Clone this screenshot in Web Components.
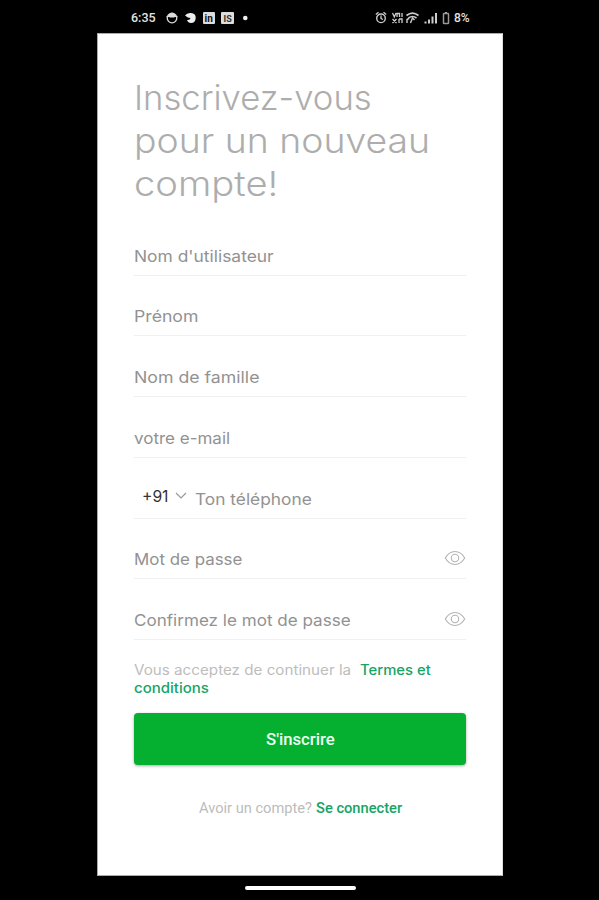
<!DOCTYPE html>
<html lang="fr">
<head>
<meta charset="utf-8">
<title>Inscription</title>
<style>
html, body { margin: 0; height: 100%; background: #000; overflow: hidden; }
</style>
</head>
<body>
<signup-screen></signup-screen>
<script>
function define(name, html, setup) {
  const template = document.createElement('template');
  template.innerHTML = html;
  customElements.define(name, class extends HTMLElement {
    constructor() {
      super();
      this.attachShadow({ mode: 'open' }).append(template.content.cloneNode(true));
    }
    connectedCallback() { if (setup) setup(this, this.shadowRoot); }
  });
}

// A single line of text stretched horizontally to the width given in "w".
define('fit-text', `
<style>
:host { display: flex; white-space: nowrap; }
span { flex: none; transform-origin: 0 50%; }
</style><span><slot></slot></span>`, (host, root) => {
  const span = root.querySelector('span');
  const w = Number(host.getAttribute('w'));
  host.style.width = w + 'px';
  span.style.transform = 'scaleX(' + w / span.offsetWidth + ')';
});

define('status-bar', `
<style>
:host { display: flex; align-items: center; height: 33px; box-sizing: border-box; padding: 2px 33px 0 34px; color: #e4e4e4; font: 500 12px/16px Roboto, sans-serif; }
svg { display: block; flex: none; }
.left, .right { display: flex; align-items: center; }
.right { margin-left: auto; }
</style>
<div class="left">
  <fit-text w="25">6:35</fit-text>
  <svg width="96" height="16" viewBox="0 0 96 16" style="margin-left:10px">
    <circle cx="6" cy="8" r="4.800" fill="none" stroke="#ddd" stroke-width="1.300"/>
    <path d="M.5 6.500h11M2.500 5.500Q6 1 9.500 5.500L8.500 7h-5z" fill="#ddd" stroke="#ddd" stroke-width="1"/>
    <path d="M19 5.500Q21 2.500 25 3Q30 3.500 29.700 8Q29.500 13 25 13Q22 13 21 10Q24 10.500 24.500 8Q22 8 19 5.500z" fill="#eee"/>
    <rect x="37" y="2" width="12" height="12" rx="1" fill="#ddd"/>
    <rect x="55" y="2" width="13" height="12" rx="1" fill="#ddd"/>
    <text x="38.500" y="12" font-family="Roboto" font-size="10" font-weight="700" fill="#111">in</text>
    <text x="57.500" y="11.500" font-family="Roboto" font-size="9" font-weight="700" fill="#333">IS</text>
    <circle cx="79.300" cy="8" r="2.300" fill="#eee"/>
  </svg>
</div>
<div class="right">
  <svg width="76" height="16" viewBox="0 0 76 16" fill="none" stroke="#ccc" style="margin-right:3px">
    <circle cx="6" cy="8.300" r="4.300" stroke-width="1.400"/><path d="M.8 4.500L3.500 2.300M11.200 4.500L8.500 2.300M6 5.500v3l2 1" stroke-width="1.300"/>
    <path d="M17.500 3l1.800 4L21 3M22 7V3.500h2.500V7M27 3v4M17.500 9l4 4M21.500 9l-4 4M24 9v4M24 9h3v4" stroke-width="1.300"/>
    <path d="M31.500 5.500Q37.500 .8 43.500 5.500M33.500 8Q37.500 5 41.500 8" stroke-width="1.700"/><path d="M32 13V9.500l2-1M35.500 13l2-5 2 2" stroke-width="1.400"/>
    <path d="M50.500 13.500v-2M54 13.500v-4M57.500 13.500v-7M61 13.500V3" stroke-width="2"/>
    <rect x="68.500" y="3.500" width="5" height="10" rx=".6" stroke="#999" stroke-width="1.500"/><path d="M70 2.500h2" stroke="#aaa"/>
  </svg>
  <fit-text w="16">8%</fit-text>
</div>`);

define('form-field', `
<style>
:host { display: flex; align-items: flex-end; height: 60.700px; box-sizing: border-box; border-bottom: 1px solid #f0f0f0; padding-bottom: 8px; font: 400 16.300px/22px Inter, sans-serif; color: #929292; }
</style><slot></slot>`);

define('eye-icon', `
<style>:host { display: block; margin: 0 0 4px auto; } svg { display: block; }</style>
<svg width="22" height="16" viewBox="0 0 22 16" fill="none" stroke="#b3b3b3" stroke-width="1.100"><path d="M1.300 8Q5 1.500 11 1.500Q17 1.500 20.700 8Q17 14.500 11 14.500Q5 14.500 1.300 8z"/><circle cx="11" cy="8" r="3.700"/></svg>`);

define('dial-code', `
<style>
:host { display: flex; align-items: center; margin: 0 8px 3px 8px; color: #333; }
svg { margin-left: 6px; }
</style><fit-text w="27"><slot></slot></fit-text>
<svg width="12" height="8" viewBox="0 0 12 8" fill="none" stroke="#999" stroke-width="1.200"><path d="M1 1l5 5 5-5"/></svg>`);

define('primary-button', `
<style>
:host { display: flex; align-items: center; justify-content: center; height: 52px; box-sizing: border-box; padding-top: 2px; border-radius: 4px; background: #05b030; color: #ecfff0; font: 500 16px/22px Roboto, sans-serif; box-shadow: 0 1px 3px rgba(0,0,0,.35); }
</style><fit-text w="69"><slot></slot></fit-text>`);

define('signup-screen', `
<style>
:host { display: grid; grid-template-rows: 33px 843px 24px; width: 406px; height: 900px; margin-left: 97px; }
main { background: #fff; box-sizing: border-box; padding: 41.500px 36px 0 36px; border: 1px solid #aaa; border-right-color: #ddd; }
h1 { margin: 0; font: 300 34.500px/43.200px Inter, sans-serif; color: #adadad; }
.fields { margin-top: 10px; }
.terms { display: grid; grid-template-columns: auto auto; justify-content: start; column-gap: 9px; margin-top: 21px; font: 400 14px/18px Inter, sans-serif; color: #bdbdbd; }
.link { color: #16a466; font-weight: 500; }
primary-button { margin-top: 16.500px; }
.login { display: flex; justify-content: center; gap: 4px; margin-top: 34px; font: 400 14.500px/20px Roboto, sans-serif; color: #bcbcbc; }
footer { display: grid; place-items: center; }
footer i { width: 111px; height: 4px; border-radius: 2px; background: #fff; }
</style>
<status-bar></status-bar>
<main>
  <h1><fit-text w="238">Inscrivez-vous</fit-text><fit-text w="296">pour un nouveau</fit-text><fit-text w="144">compte!</fit-text></h1>
  <div class="fields">
    <form-field><fit-text w="140">Nom d'utilisateur</fit-text></form-field>
    <form-field><fit-text w="64">Prénom</fit-text></form-field>
    <form-field><fit-text w="125">Nom de famille</fit-text></form-field>
    <form-field><fit-text w="96">votre e-mail</fit-text></form-field>
    <form-field><dial-code>+91</dial-code><fit-text w="117">Ton téléphone</fit-text></form-field>
    <form-field><fit-text w="108">Mot de passe</fit-text><eye-icon></eye-icon></form-field>
    <form-field><fit-text w="217">Confirmez le mot de passe</fit-text><eye-icon></eye-icon></form-field>
  </div>
  <div class="terms"><fit-text w="217">Vous acceptez de continuer la</fit-text><fit-text class="link" w="71">Termes et</fit-text><fit-text class="link" w="75">conditions</fit-text></div>
  <primary-button>S'inscrire</primary-button>
  <div class="login"><fit-text w="113">Avoir un compte?</fit-text><fit-text class="link" w="86">Se connecter</fit-text></div>
</main>
<footer><i></i></footer>`);
</script>
</body>
</html>
